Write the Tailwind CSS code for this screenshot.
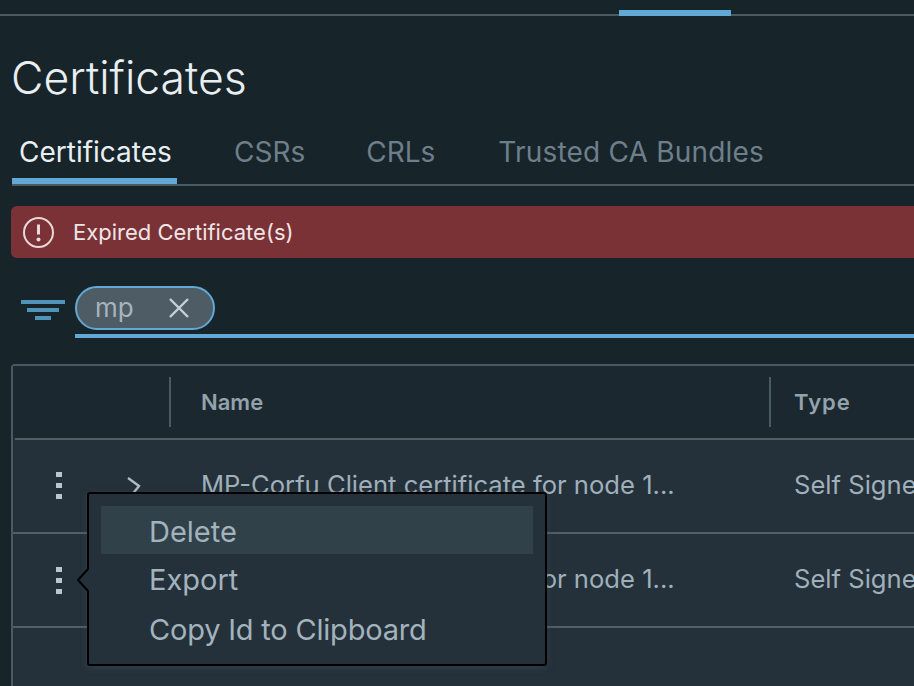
<!DOCTYPE html>
<html><head><meta charset="utf-8"><script src="https://cdn.jsdelivr.net/npm/@tailwindcss/browser@4"></script></head>
<body class="m-0">
<div class="relative w-[914px] h-[686px] overflow-hidden bg-[#17242a] font-['Inter','Noto_Sans',sans-serif] text-[#adbbc4]">
  <!-- top nav -->
  <div class="h-[16px] border-b-2 border-[#4a5a63] relative">
    <div class="absolute left-[619px] w-[112px] top-[10px] h-[6px] bg-[#62a9d6]"></div>
  </div>
  <h1 class="m-0 ml-[11px] mt-[36px] h-[54px] text-[44.5px] leading-[52px] font-light text-[#e9eef1]">Certificates</h1>
  <!-- tabs -->
  <div class="mt-[25px] ml-[12px] h-[55px] flex border-b-2 border-[#4a5a63] text-[28px] leading-[42px]">
    <div class="w-[165px] h-[53px] border-b-[6px] border-[#62a9d6] pl-[7px] text-[#e9eef1]">Certificates</div>
    <div class="ml-[57px] text-[#6e7f8a]">CSRs</div>
    <div class="ml-[61px] text-[#6e7f8a]">CRLs</div>
    <div class="ml-[63px] text-[#6e7f8a] tracking-[0.2px]">Trusted CA Bundles</div>
  </div>
  <!-- alert -->
  <div class="mt-[20px] ml-[11px] h-[52px] rounded-l-[6px] bg-[#7b3236] flex items-center text-[#eee6e6] text-[22px]">
    <svg class="ml-[11px] w-[33px] h-[33px]" viewBox="0 0 33 33" fill="none"><circle cx="16.5" cy="16.5" r="14.5" stroke="#e8d8d8" stroke-width="2"/><path d="M16.5 8.5v10" stroke="#e8d8d8" stroke-width="3"/><circle cx="16.5" cy="23.5" r="2" fill="#e8d8d8"/></svg>
    <span class="ml-[18px]">Expired Certificate(s)</span>
  </div>
  <!-- filter -->
  <div class="mt-[28px] ml-[21px] h-[52px] flex">
    <svg class="mt-[14px] w-[44px] h-[22px]" viewBox="0 0 44 22" fill="#4f93b8"><rect x="0" y="0" width="44" height="4"/><rect x="6" y="8" width="32" height="4"/><rect x="14" y="16" width="16" height="4"/></svg>
    <div class="ml-[10px] flex-1 border-b-4 border-[#62a9d6] h-[52px]">
      <div class="w-[140px] h-[44px] rounded-full border-2 border-[#62a9d6] bg-[#4e5c66] flex items-center text-[26px] text-[#a6b4bd]">
        <span class="ml-[18px] -mt-[2px]">mp</span>
        <svg class="ml-[35px] w-[20px] h-[20px]" viewBox="0 0 20 20" stroke="#c5d0d7" stroke-width="2.4"><path d="M1 1l18 18M19 1L1 19"/></svg>
      </div>
    </div>
  </div>
  <!-- table -->
  <div class="absolute left-[11px] top-[364px] w-[1000px] h-[400px] border-2 border-[#4a5a63] rounded-[4px] bg-[#25313a]">
    <div class="h-[72px] bg-[#1c2830] flex items-center border-b-0 text-[22px] font-semibold text-[#93a2ab]">
      <div class="w-[158px] h-[50px] border-r-2 border-[#4a5a63]"></div>
      <div class="w-[600px] h-[50px] border-r-2 border-[#4a5a63] pl-[30px] leading-[50px]">Name</div>
      <div class="pl-[23px] tracking-[1px]">Type</div>
    </div>
    <div class="ml-[2px] h-[2px] bg-[#4f5f68]"></div>
    <div class="h-[92px] flex items-center text-[25.6px] text-[#9fb0ba] relative">
      <svg class="ml-[42px] w-[8px] h-[30px] -mt-[2px]" viewBox="0 0 8 30" fill="#b8c6ce"><rect x="1" y="2" width="6" height="5"/><rect x="1" y="13" width="6" height="5"/><rect x="1" y="24" width="6" height="5"/></svg>
      <svg class="ml-[63px] w-[16px] h-[20px]" viewBox="0 0 16 20" fill="none" stroke="#aebcc4" stroke-width="2.4"><path d="M2 2l11 8-8 10"/></svg>
      <div class="ml-[59px] w-[593px] whitespace-nowrap pb-[2px]">MP-Corfu Client certificate for node 1...</div>
      <div class="whitespace-nowrap pb-[2px]">Self Signed</div>
    </div>
    <div class="h-[2px] bg-[#4f5f68]"></div>
    <div class="h-[92px] flex items-center text-[25.6px] text-[#9fb0ba]">
      <svg class="ml-[42px] w-[8px] h-[30px]" viewBox="0 0 8 30" fill="#b8c6ce"><rect x="1" y="2" width="6" height="5"/><rect x="1" y="13" width="6" height="5"/><rect x="1" y="24" width="6" height="5"/></svg>
      <div class="ml-[138px] w-[593px] whitespace-nowrap pb-[2px]">MP-Corfu Client certificate for node 1...</div>
      <div class="whitespace-nowrap pb-[2px]">Self Signed</div>
    </div>
    <div class="h-[2px] bg-[#4f5f68]"></div>
  </div>
  <!-- menu -->
  <div class="absolute left-[87px] top-[492px] w-[460px] h-[174px] border-2 border-black rounded-[3px] bg-[#25313a] px-[12px] pt-[12px] text-[29px] text-[#a3b3bd] shadow-[0_2px_6px_rgba(60,80,90,0.5)]">
    <div class="h-[48px] leading-[52px] pl-[48px] bg-[#30414a]">Delete</div>
    <div class="h-[49px] leading-[52px] pl-[48px]">Export</div>
    <div class="h-[49px] leading-[54px] pl-[48px] tracking-[-0.2px]">Copy Id to Clipboard</div>
  </div>
  <svg class="absolute left-[76px] top-[568px] w-[14px] h-[24px]" viewBox="0 0 14 24"><path d="M13 1L2 12l11 11z" fill="#25313a"/><path d="M12 1L2 12l10 11" fill="none" stroke="#000" stroke-width="2"/></svg>
</div>
</body></html>
